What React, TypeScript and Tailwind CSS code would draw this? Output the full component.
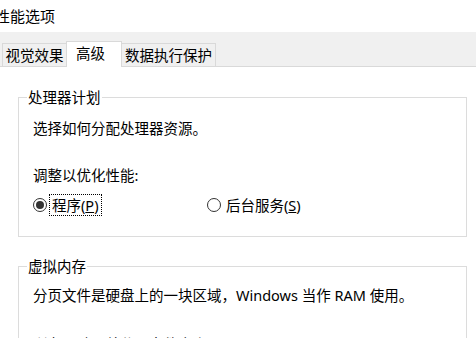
import React from "react";

const font = { fontFamily: '"Noto Sans", "Noto Sans CJK SC", sans-serif' };

function Radio({ checked }: { checked?: boolean }) {
  return (
    <span className="flex h-[14px] w-[14px] items-center justify-center rounded-full border border-[#333333] bg-white">
      {checked ? <span className="h-[8px] w-[8px] rounded-full bg-[#333333]" /> : null}
    </span>
  );
}

export default function App() {
  return (
    <div
      className="h-[338px] w-[476px] overflow-hidden bg-white text-[14.5px] leading-[20px] text-black"
      style={font}
    >
      <div className="flex h-[32px] items-center">
        <span className="-ml-[5px] text-[15px]">性能选项</span>
      </div>

      <div className="flex h-[35px] items-end border-b border-[#d9d9d9] bg-[#f0f0f0] pl-[2px]">
        <div className="flex h-[23px] w-[64px] items-center justify-center border border-b-0 border-r-0 border-[#d9d9d9]">
          视觉效果
        </div>
        <div className="relative z-10 -mb-px flex h-[26px] w-[56px] items-start border border-b-0 border-[#d9d9d9] bg-white pl-[9px] pt-[1px]">
          高级
        </div>
        <div className="flex h-[23px] w-[94px] items-center justify-center border border-b-0 border-l-0 border-[#d9d9d9]">
          数据执行保护
        </div>
      </div>

      <div className="pl-[18px] pr-[9px]">
        <fieldset className="mt-[20px] border border-[#dcdcdc] pb-[20px] pl-[14px]">
          <legend className="-ml-[6px] px-[1px]">处理器计划</legend>
          <div className="mt-[11px]">选择如何分配处理器资源。</div>
          <div className="mt-[27px]">调整以优化性能:</div>
          <div className="mt-[9px] flex h-[22px] items-center">
            <div className="flex w-[174px] items-center">
              <Radio checked />
              <span className="ml-[2px] border border-dotted border-black px-[2px] leading-[20px]">
                程序(<span className="underline">P</span>)
              </span>
            </div>
            <div className="flex items-center">
              <Radio />
              <span className="ml-[5px]">
                后台服务(<span className="underline">S</span>)
              </span>
            </div>
          </div>
        </fieldset>

        <fieldset className="mt-[19px] border border-[#dcdcdc] pb-[20px] pl-[14px]">
          <legend className="-ml-[6px] px-[1px]">虚拟内存</legend>
          <div className="mt-[9px]">分页文件是硬盘上的一块区域，Windows 当作 RAM 使用。</div>
          <div className="mt-[29px] flex">
            <span className="w-[282px]">所有驱动器总分页文件大小:</span>
            <span>2432 MB</span>
          </div>
        </fieldset>
      </div>
    </div>
  );
}
